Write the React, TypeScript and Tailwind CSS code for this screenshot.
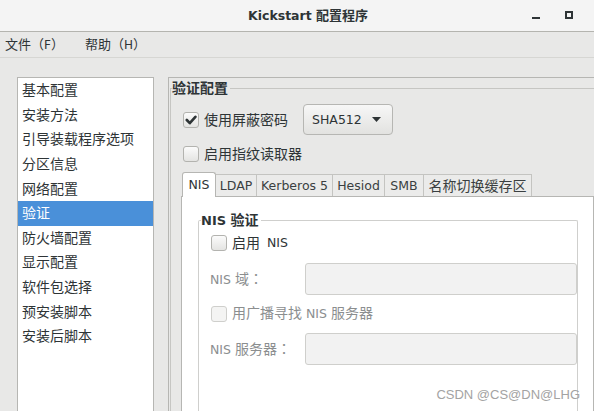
import React from 'react';

const CJK = /([\u3000-\u303f\u3400-\u9fff\uff00-\uffef]+)/;

// mixed text: CJK runs and Latin runs get their own sizes, as GTK renders them
function T({ s, cjk = 'text-[14px]', latin = 'text-[12.5px]' }: { s: string; cjk?: string; latin?: string }) {
  return (
    <>
      {s.split(CJK).filter(Boolean).map((part, i) =>
        CJK.test(part) ? (
          <span key={i} className={cjk}>{part}</span>
        ) : (
          <span key={i} className={latin}>{part}</span>
        )
      )}
    </>
  );
}

function CheckBox({ checked = false, disabled = false }: { checked?: boolean; disabled?: boolean }) {
  return (
    <span
      className={`w-[16px] h-[16px] shrink-0 rounded-[3px] border flex items-center justify-center ${
        disabled
          ? 'border-[#cfcfcc] bg-[#f4f4f3]'
          : 'border-[#b3b3af] bg-gradient-to-b from-[#fbfbfb] to-[#e4e4e2]'
      }`}
    >
      {checked && (
        <svg width="12" height="12" viewBox="0 0 12 12">
          <path d="M1.8 6 L4.8 9.2 L10.4 2.8" fill="none" stroke="#2e3436" strokeWidth="2.6" strokeLinecap="round" strokeLinejoin="round" />
        </svg>
      )}
    </span>
  );
}

// centered fullwidth colon, like the TC glyph GTK picked
function Colon() {
  return <span className="text-[14px] font-['Noto_Sans_CJK_TC',sans-serif]">：</span>;
}

const sections = [
  '基本配置',
  '安装方法',
  '引导装载程序选项',
  '分区信息',
  '网络配置',
  '验证',
  '防火墙配置',
  '显示配置',
  '软件包选择',
  '预安装脚本',
  '安装后脚本',
];

const tabs = [
  { label: 'NIS', w: 'w-[34px]' },
  { label: 'LDAP', w: 'w-[41px]' },
  { label: 'Kerberos 5', w: 'w-[76px]' },
  { label: 'Hesiod', w: 'w-[52px]' },
  { label: 'SMB', w: 'w-[39px]' },
  { label: '名称切换缓存区', w: 'w-[108px]' },
];

export default function App() {
  return (
    <div className="relative w-[594px] h-[411px] overflow-hidden flex flex-col bg-[#e8e8e7] text-[#2e3436] leading-[16px] font-['DejaVu_Sans','Noto_Sans_CJK_SC',sans-serif]">
      {/* title bar */}
      <div className="h-[32px] shrink-0 flex items-center bg-[#f4f4f4] border-b border-[#b4b4af] pl-[248px] pr-[21px]">
        <span className="font-bold whitespace-pre">
          <T s="Kickstart 配置程序" cjk="text-[13px]" latin="text-[12.5px]" />
        </span>
        <div className="ml-auto flex items-center gap-[25px]">
          <span className="w-[8px] h-[2px] mt-[4px] bg-[#2e3436]" />
          <span className="w-[8px] h-[8px] border-2 border-[#2e3436] -mt-[2px]" />
        </div>
      </div>

      {/* menu bar */}
      <div className="h-[26px] shrink-0 flex items-center border-b border-[#d6d6d3] pl-[5px] gap-[21px]">
        <span><T s="文件（F）" cjk="text-[13px]" latin="text-[12px]" /></span>
        <span><T s="帮助（H）" cjk="text-[13px]" latin="text-[12px]" /></span>
      </div>

      {/* body */}
      <div className="flex-1 min-h-0 flex pt-[19px]">
        <div className="ml-[17px] w-[137px] h-[350px] shrink-0 bg-white border border-[#b6b6b3]">
          {sections.map((s) => (
            <div
              key={s}
              className={`h-[24.6px] flex items-center pl-[4px] text-[14px] ${
                s === '验证' ? 'bg-[#4a90d9] text-white' : ''
              }`}
            >
              {s}
            </div>
          ))}
        </div>

        <div className="ml-[14px] w-[430px] h-[350px] shrink-0 border-l border-t border-[#b6b6b3]">
          <div className="relative ml-[1px] mt-[10px] h-[340px] border-l border-t border-[#c6c6c3]">
            <span className="absolute left-[1px] -top-[10px] leading-[18px] text-[14px] font-bold bg-[#e8e8e7] pr-[2px]">
              验证配置
            </span>

            <div className="pl-[10px] pt-[15px]">
              <div className="flex items-center">
                <span className="ml-[2px]"><CheckBox checked /></span>
                <span className="ml-[5px] text-[14px]">使用屏蔽密码</span>
                <div className="ml-[15px] w-[90px] h-[31px] rounded-[4px] border border-[#b6b6b3] bg-gradient-to-b from-[#f7f7f7] to-[#e2e2e0] flex items-center pl-[8px] pr-[11px]">
                  <span className="text-[12.5px]">SHA512</span>
                  <svg className="ml-auto" width="9" height="5" viewBox="0 0 9 5">
                    <path d="M0 0 H9 L4.5 5 Z" fill="#2e3436" />
                  </svg>
                </div>
              </div>

              <div className="mt-[11px] flex items-center">
                <span className="ml-[2px]"><CheckBox /></span>
                <span className="ml-[5px] text-[14px]">启用指纹读取器</span>
              </div>

              {/* tabs */}
              <div className="mt-[10px] ml-[1px] h-[24px] flex items-end">
                {tabs.map((t, i) =>
                  i === 0 ? (
                    <div
                      key={t.label}
                      className={`${t.w} h-[25px] -mb-[1px] relative z-10 bg-white border-l border-t border-r border-[#b6b6b3] rounded-t-[3px] flex items-center justify-center`}
                    >
                      <T s={t.label} />
                    </div>
                  ) : (
                    <div
                      key={t.label}
                      className={`${t.w} h-[22px] bg-[#ebebea] border-t border-r border-[#c4c4c1] flex items-center justify-center text-[#3a3f41]`}
                    >
                      <T s={t.label} />
                    </div>
                  )
                )}
              </div>

              <div className="w-[413px] h-[300px] bg-white border border-[#b6b6b3]">
                <div className="relative ml-[16px] mt-[23px] w-[380px] h-[260px] border-l border-t border-r border-[#cfcfcd] rounded-t-[2px]">
                  <span className="absolute left-[2px] -top-[10px] leading-[18px] font-bold bg-white pr-[2px]">
                    <T s="NIS 验证" cjk="text-[14px]" latin="text-[13px]" />
                  </span>

                  <div className="pl-[11px] pt-[14px]">
                    <div className="flex items-center">
                      <span className="ml-[1px]"><CheckBox /></span>
                      <span className="ml-[5px] text-[14px]">启用</span>
                      <span className="ml-[7px] text-[12.5px]">NIS</span>
                    </div>

                    <div className="mt-[12px] flex items-center text-[#8b8e8f]">
                      <span className="w-[95px] whitespace-pre"><T s="NIS 域" /><Colon /></span>
                      <div className="w-[272px] h-[32px] rounded-[3px] border border-[#cfcfcc] bg-[#f2f2f2]" />
                    </div>

                    <div className="mt-[10px] flex items-center text-[#8b8e8f]">
                      <span className="ml-[1px]"><CheckBox disabled /></span>
                      <span className="ml-[5px] whitespace-pre"><T s="用广播寻找 NIS 服务器" /></span>
                    </div>

                    <div className="mt-[11px] flex items-center text-[#8b8e8f]">
                      <span className="w-[95px] whitespace-pre"><T s="NIS 服务器" /><Colon /></span>
                      <div className="w-[272px] h-[32px] rounded-[3px] border border-[#cfcfcc] bg-[#f2f2f2]" />
                    </div>
                  </div>
                </div>
              </div>
            </div>
          </div>
        </div>
      </div>

      {/* watermark */}
      <span className="absolute right-[14px] bottom-[8px] text-[13px] leading-[16px] text-[#a3a3a3] font-['Liberation_Sans',sans-serif]">
        CSDN @CS@DN@LHG
      </span>
    </div>
  );
}
